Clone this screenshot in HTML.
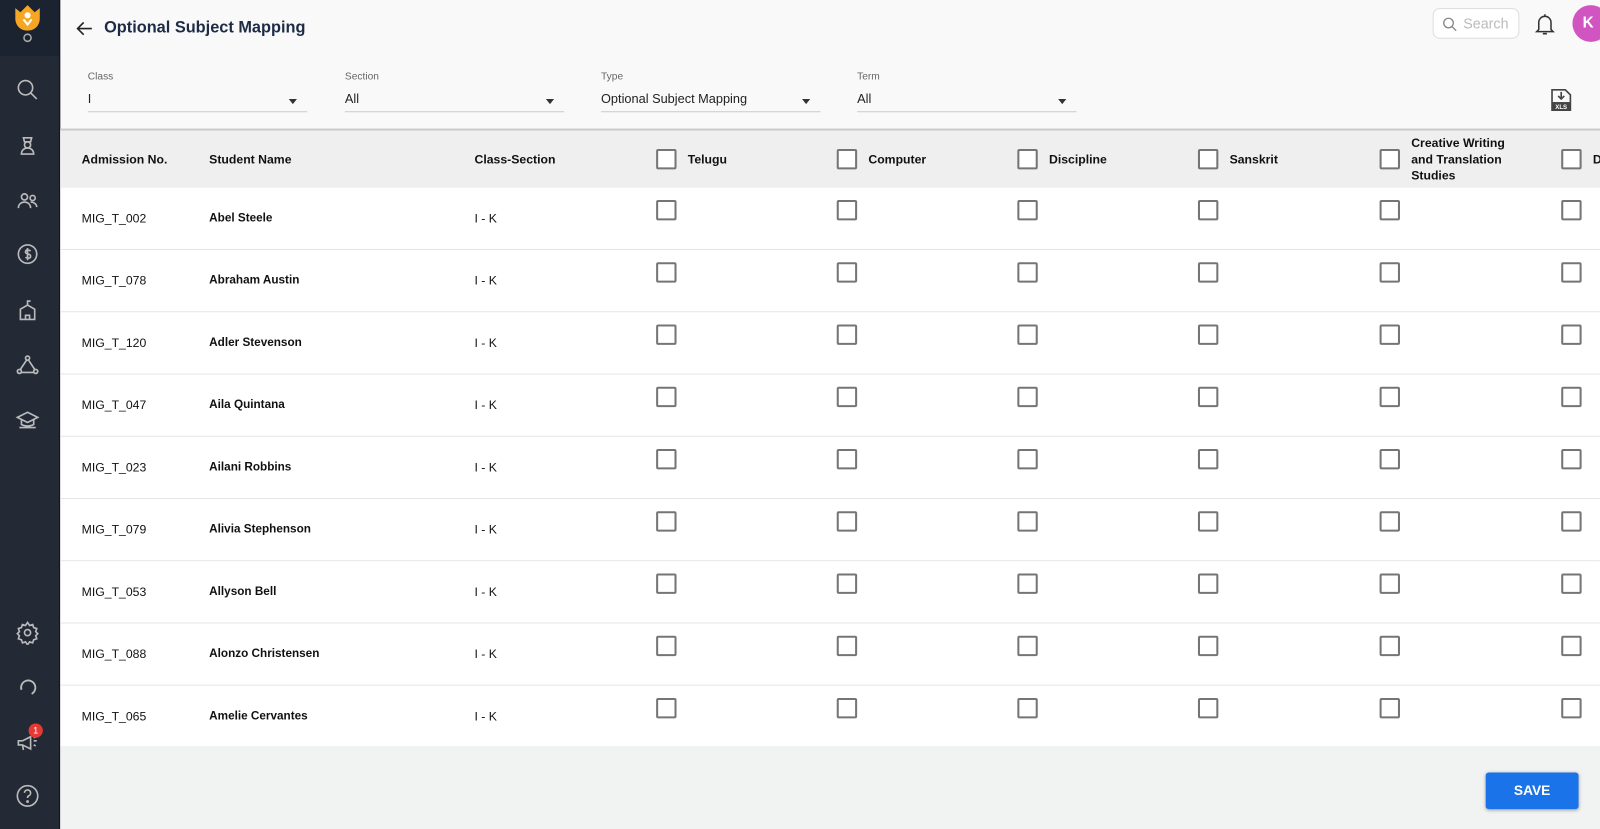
<!DOCTYPE html>
<html><head><meta charset="utf-8"><style>
*{box-sizing:border-box;margin:0;padding:0}
html,body{width:1600px;height:829px;overflow:hidden;background:#f9f9f9;font-family:"Liberation Sans",sans-serif}
#w{width:1568px;height:813px;transform:scale(1.0204);transform-origin:0 0;position:relative;background:#f9f9f9}
.sb{position:absolute;left:0;top:0;width:59px;height:813px;background:#232a36;border-right:1px solid #111}
.sb .top{height:55px;background:#1b2230}
.ic{position:absolute;left:15px;width:24px;height:24px}
.hdr{position:absolute;left:75px;top:19px;font-size:16px;font-weight:bold;color:#1e2b45;display:flex;align-items:center;gap:11px}
.f{position:absolute;top:70px;width:215px}
.f .l{font-size:10px;color:#666}
.f .v{margin-top:9px;font-size:12.5px;color:#222;border-bottom:1px solid #ccc;padding-bottom:5px;position:relative}
.f .v:after{content:"";position:absolute;right:10px;top:7px;border:4px solid transparent;border-top:5px solid #333}
.tbl{position:absolute;left:59px;top:126px;width:1509px;height:605px;background:#fff;border-top:2px solid #c8c8c8;overflow:hidden}
.th{height:56px;background:#efefef;position:relative;font-weight:bold;font-size:12px;color:#111}
.row{height:61px;border-bottom:1px solid #e6e6e6;position:relative;font-size:12px;color:#111}
.row .c{line-height:16px;top:22px}
.c{position:absolute}
.cb{position:absolute;width:20px;height:20px;border:2px solid #757575;border-radius:2px;background:#fff}
.foot{position:absolute;left:59px;top:731px;width:1509px;height:82px;background:#f1f2f2}
.save{position:absolute;left:1456px;top:757px;width:91px;height:36px;background:#1a73e8;border-radius:3px;color:#fff;font-weight:bold;font-size:13.5px;text-align:center;line-height:36px;box-shadow:0 1px 3px rgba(0,0,0,.3)}
</style></head><body><div id="w">
<div class="sb"><div class="top"><svg style="position:absolute;left:13px;top:4px" width="28" height="40" viewBox="0 0 28 40"><path d="M2 4l5 4 7-7 7 7 5-4v10c0 7-5 12-12 12S2 21 2 14z" fill="#f5a623"/><circle cx="14" cy="11" r="3" fill="#fff"/><path d="M10 15l4 5 4-5" stroke="#fff" stroke-width="2" fill="none"/><circle cx="14" cy="33" r="3.5" fill="none" stroke="#aaa" stroke-width="1.5"/></svg></div>
<svg class="ic" style="top:76px" viewBox="0 0 24 24" fill="none" stroke="#bbb" stroke-width="1.6"><circle cx="10" cy="10" r="7"/><path d="M15 15l6 6"/></svg>
<svg class="ic" style="top:130px" viewBox="0 0 24 24" fill="none" stroke="#bbb" stroke-width="1.6"><path d="M8 5h8l-1 4H9z"/><circle cx="12" cy="12" r="3"/><path d="M6 21c0-4 3-6 6-6s6 2 6 6z"/></svg>
<svg class="ic" style="top:185px" viewBox="0 0 24 24" fill="none" stroke="#bbb" stroke-width="1.6"><circle cx="9" cy="8" r="3"/><circle cx="17" cy="9" r="2.5"/><path d="M3 19c0-4 3-6 6-6s6 2 6 6M15 13c3 0 6 2 6 5"/></svg>
<svg class="ic" style="top:237px" viewBox="0 0 24 24" fill="none" stroke="#bbb" stroke-width="1.6"><circle cx="12" cy="12" r="9"/><path d="M15 9c-1-1-5-2-5 1s5 1 5 4-4 2-5 1M12 6v12"/></svg>
<svg class="ic" style="top:292px" viewBox="0 0 24 24" fill="none" stroke="#bbb" stroke-width="1.6"><path d="M5 21V11l7-4 7 4v10zM12 7V3h3M10 21v-4h4v4"/></svg>
<svg class="ic" style="top:346px" viewBox="0 0 24 24" fill="none" stroke="#bbb" stroke-width="1.6"><circle cx="12" cy="5" r="2"/><circle cx="4" cy="18" r="2"/><circle cx="20" cy="18" r="2"/><path d="M11 7L5 16M13 7l6 9M6 19h12"/></svg>
<svg class="ic" style="top:400px" viewBox="0 0 24 24" fill="none" stroke="#bbb" stroke-width="1.6"><path d="M2 9l10-5 10 5-10 5zM6 11v5c3 2 9 2 12 0v-5M4 19h16"/></svg>
<svg class="ic" style="top:608px" viewBox="0 0 24 24" fill="none" stroke="#bbb" stroke-width="1.6"><circle cx="12" cy="12" r="3"/><path d="M12 2l2 3 3-1 1 3 3 1-1 3 2 2-2 2 1 3-3 1-1 3-3-1-2 3-2-3-3 1-1-3-3-1 1-3-2-2 2-2-1-3 3-1 1-3 3 1z"/></svg>
<svg class="ic" style="top:662px" viewBox="0 0 24 24" fill="none" stroke="#bbb" stroke-width="1.8"><path d="M6 14a7 7 0 1 1 10 4"/></svg>
<svg class="ic" style="top:716px" viewBox="0 0 24 24" fill="none" stroke="#bbb" stroke-width="1.6"><path d="M3 10h4l8-4v12l-8-4H3zM7 14l1 5M18 10h3M18 7l2-1M18 14l2 1"/></svg>
<div style="position:absolute;left:28px;top:709px;width:14px;height:14px;border-radius:50%;background:#e53935;color:#fff;font-size:9px;text-align:center;line-height:14px">1</div>
<svg class="ic" style="top:768px" viewBox="0 0 24 24" fill="none" stroke="#bbb" stroke-width="1.6"><circle cx="12" cy="12" r="10"/><path d="M9 9a3 3 0 1 1 4 3c-1 .5-1 1-1 2"/><circle cx="12" cy="17.5" r=".6" fill="#bbb"/></svg>
</div>
<div class="hdr"><svg width="16" height="14" viewBox="0 0 16 14" fill="none" stroke="#222" stroke-width="1.6"><path d="M15 7H2M7 1L1 7l6 6"/></svg>Optional Subject Mapping</div>
<div style="position:absolute;left:1404px;top:8px;width:85px;height:30px;border:1px solid #ddd;border-radius:7px;background:#fff;color:#bbb;font-size:14px;line-height:28px;padding-left:29px">Search<svg style="position:absolute;left:8px;top:7px" width="15" height="15" viewBox="0 0 16 16" fill="none" stroke="#888" stroke-width="1.4"><circle cx="7" cy="7" r="5"/><path d="M11 11l4 4"/></svg></div>
<svg style="position:absolute;left:1504px;top:12px" width="20" height="24" viewBox="0 0 20 24" fill="none" stroke="#333" stroke-width="1.5"><path d="M4 17V10a6 6 0 0 1 12 0v7l2 2H2zM8 21h4M10 2v2"/></svg>
<div style="position:absolute;left:1541px;top:5px;width:36px;height:36px;border-radius:50%;background:#d155c0;color:#fff;font-weight:bold;font-size:15px;line-height:36px;padding-left:10px">K</div>
<div class="f" style="left:86px"><div class="l">Class</div><div class="v">I</div></div>
<div class="f" style="left:338px"><div class="l">Section</div><div class="v">All</div></div>
<div class="f" style="left:589px"><div class="l">Type</div><div class="v">Optional Subject Mapping</div></div>
<div class="f" style="left:840px"><div class="l">Term</div><div class="v">All</div></div>
<svg style="position:absolute;left:1519px;top:86px" width="22" height="24" viewBox="0 0 22 24"><path d="M2 2h13l5 5v15H2z" fill="none" stroke="#444" stroke-width="1.6"/><rect x="2" y="14" width="18" height="8" fill="#444"/><path d="M11 4v7M8 8l3 3 3-3" stroke="#444" stroke-width="1.6" fill="none"/><text x="11" y="21" font-size="6" fill="#fff" text-anchor="middle" font-family="Liberation Sans" font-weight="bold">XLS</text></svg>
<div class="tbl">
<div class="th"><div class="c" style="left:21px;top:21px">Admission No.</div><div class="c" style="left:146px;top:21px">Student Name</div><div class="c" style="left:406px;top:21px">Class-Section</div>
<div class="cb" style="left:584px;top:18px"></div><div class="c" style="left:615px;top:21px">Telugu</div>
<div class="cb" style="left:761px;top:18px"></div><div class="c" style="left:792px;top:21px">Computer</div>
<div class="cb" style="left:938px;top:18px"></div><div class="c" style="left:969px;top:21px">Discipline</div>
<div class="cb" style="left:1115px;top:18px"></div><div class="c" style="left:1146px;top:21px">Sanskrit</div>
<div class="cb" style="left:1293px;top:18px"></div><div class="c" style="left:1324px;top:4px;line-height:16px">Creative Writing<br>and Translation<br>Studies</div>
<div class="cb" style="left:1471px;top:18px"></div><div class="c" style="left:1502px;top:21px">D</div></div>
<div id="rows"></div>
</div>
<div class="foot"></div>
<div class="save">SAVE</div>
</div>
<script>
var d=[["MIG_T_002","Abel Steele"],["MIG_T_078","Abraham Austin"],["MIG_T_120","Adler Stevenson"],["MIG_T_047","Aila Quintana"],["MIG_T_023","Ailani Robbins"],["MIG_T_079","Alivia Stephenson"],["MIG_T_053","Allyson Bell"],["MIG_T_088","Alonzo Christensen"],["MIG_T_065","Amelie Cervantes"]],h="";
d.forEach(function(r){h+='<div class="row"><div class="c" style="left:21px">'+r[0]+'</div><div class="c" style="left:146px;font-weight:bold;font-size:11.5px">'+r[1]+'</div><div class="c" style="left:406px">I - K</div>';[584,761,938,1115,1293,1471].forEach(function(x){h+='<div class="cb" style="left:'+x+'px;top:12px"></div>'});h+='</div>'});
document.getElementById("rows").innerHTML=h;
</script>
</body></html>
